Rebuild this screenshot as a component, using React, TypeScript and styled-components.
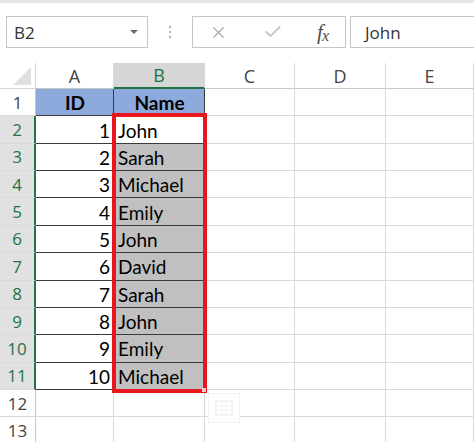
import React from "react";
import styled, { createGlobalStyle } from "styled-components";
import { X, Check } from "lucide-react";

const GlobalStyle = createGlobalStyle`
  html, body {
    margin: 0;
    padding: 0;
    background: #ffffff;
    overflow: hidden;
  }
  * {
    box-sizing: border-box;
  }
`;

const UI_FONT = `"Open Sans", "Noto Sans", sans-serif`;
const CELL_FONT = `Lato, "Liberation Sans", sans-serif`;
const GREEN = "#217346";
const GRID = "#d9d9d9";
const DARK = "#3b3b3b";

const columns = ["A", "B", "C", "D", "E"];
const names = [
  "John",
  "Sarah",
  "Michael",
  "Emily",
  "John",
  "David",
  "Sarah",
  "John",
  "Emily",
  "Michael",
];

// empty cells for columns C, D, E
const EmptyTail = () => (
  <>
    <Cell />
    <Cell />
    <Cell />
  </>
);

export default function App() {
  return (
    <>
      <GlobalStyle />
      <Page>
        <TopStrip />
        <FormulaBar>
          <NameBox>
            <span>B2</span>
            <DropArrow />
          </NameBox>
          <Grip>
            <Dot />
            <Dot />
            <Dot />
          </Grip>
          <ButtonBox>
            <X size={19} strokeWidth={1.4} color="#a6a6a6" />
            <Check size={20} strokeWidth={2.2} color="#c4c4c4" />
            <Fx>
              f<sub>x</sub>
            </Fx>
          </ButtonBox>
          <FormulaInput>John</FormulaInput>
        </FormulaBar>

        <Sheet>
          <Corner>
            <CornerTriangle />
          </Corner>
          {columns.map((c) => (
            <ColHeader key={c} $selected={c === "B"}>
              {c}
            </ColHeader>
          ))}

          <RowHeader $selected={false}>1</RowHeader>
          <Cell $fill="#8ea9db" $dark $bold $align="center">
            ID
          </Cell>
          <Cell $fill="#8ea9db" $dark $bold $align="center">
            Name
          </Cell>
          <EmptyTail />

          {names.map((name, i) => (
            <React.Fragment key={i}>
              <RowHeader $selected>{i + 2}</RowHeader>
              <Cell $dark $align="right">
                {i + 1}
              </Cell>
              <Cell $dark $fill={i === 0 ? "#ffffff" : "#c0c0c0"}>
                {name}
              </Cell>
              <EmptyTail />
            </React.Fragment>
          ))}

          {[12, 13].map((r) => (
            <React.Fragment key={r}>
              <RowHeader $selected={false}>{r}</RowHeader>
              <Cell />
              <Cell />
              <EmptyTail />
            </React.Fragment>
          ))}

          <Selection>
            <FillHandle />
          </Selection>
          <QuickAnalysis>
            <svg width="18" height="16" viewBox="0 0 18 16">
              <rect x="1" y="1" width="16" height="14" fill="none" stroke="#ececec" />
              <line x1="4" y1="6" x2="14" y2="6" stroke="#ececec" />
              <line x1="4" y1="10" x2="14" y2="10" stroke="#ececec" />
            </svg>
          </QuickAnalysis>
        </Sheet>
      </Page>
    </>
  );
}

const Page = styled.div`
  width: 474px;
  height: 442px;
  overflow: hidden;
  display: flex;
  flex-direction: column;
  background: #ffffff;
`;

const TopStrip = styled.div`
  height: 3px;
  background: #e6e6e6;
  flex-shrink: 0;
`;

const FormulaBar = styled.div`
  display: flex;
  align-items: stretch;
  height: 32px;
  margin: 13px 0 15px 6px;
  flex-shrink: 0;
  font-family: ${UI_FONT};
  font-size: 17px;
  color: #333333;
`;

const NameBox = styled.div`
  width: 142px;
  border: 1px solid #c6c6c6;
  display: flex;
  align-items: center;
  justify-content: space-between;
  padding: 0 9px 0 7px;
`;

const DropArrow = styled.span`
  width: 0;
  height: 0;
  border-left: 4px solid transparent;
  border-right: 4px solid transparent;
  border-top: 4px solid #6d6d6d;
`;

const Grip = styled.div`
  width: 44px;
  display: flex;
  flex-direction: column;
  align-items: center;
  justify-content: center;
  gap: 3px;
`;

const Dot = styled.span`
  width: 2px;
  height: 2px;
  border-radius: 50%;
  background: #9a9a9a;
`;

const ButtonBox = styled.div`
  width: 154px;
  border: 1px solid #c6c6c6;
  display: flex;
  align-items: center;
  justify-content: space-between;
  padding: 0 16px 0 16px;
`;

const Fx = styled.span`
  font-family: "Liberation Serif", "DejaVu Serif", serif;
  font-style: italic;
  font-size: 21px;
  color: #4d4d4d;
  line-height: 1;

  sub {
    font-size: 16px;
    vertical-align: baseline;
    position: relative;
    top: 2px;
    margin-left: -1px;
  }
`;

const FormulaInput = styled.div`
  flex: 1;
  margin-left: 4px;
  margin-right: -4px;
  border: 1px solid #c6c6c6;
  display: flex;
  align-items: center;
  padding-left: 14px;
`;

const Sheet = styled.div`
  position: relative;
  display: grid;
  grid-template-columns: 36px 78px 91px 90px 91px 88px;
  grid-template-rows: 26px repeat(13, 27.36px);
  flex-shrink: 0;
`;

const Corner = styled.div`
  position: relative;
  border-right: 1px solid ${GRID};
  border-bottom: 1px solid ${GRID};
`;

const CornerTriangle = styled.span`
  position: absolute;
  right: 4px;
  bottom: 3px;
  width: 0;
  height: 0;
  border-left: 18px solid transparent;
  border-bottom: 18px solid #dfdfdf;
`;

const ColHeader = styled.div<{ $selected: boolean }>`
  display: flex;
  align-items: center;
  justify-content: center;
  font-family: ${UI_FONT};
  font-size: 18px;
  color: ${(p) => (p.$selected ? GREEN : "#444444")};
  background: ${(p) => (p.$selected ? "#d6d6d6" : "#ffffff")};
  border-right: 1px solid ${GRID};
  border-bottom: ${(p) => (p.$selected ? `2px solid ${GREEN}` : `1px solid #c8c8c8`)};
`;

const RowHeader = styled.div<{ $selected: boolean }>`
  display: flex;
  align-items: center;
  justify-content: center;
  font-family: ${UI_FONT};
  font-size: 17px;
  color: ${(p) => (p.$selected ? GREEN : "#444444")};
  background: ${(p) => (p.$selected ? "#e1e1e1" : "#ffffff")};
  border-bottom: 1px solid ${GRID};
  border-right: ${(p) => (p.$selected ? `2px solid ${GREEN}` : `1px solid #c8c8c8`)};
`;

const Cell = styled.div<{
  $fill?: string;
  $dark?: boolean;
  $bold?: boolean;
  $align?: "left" | "center" | "right";
}>`
  display: flex;
  align-items: center;
  justify-content: ${(p) =>
    p.$align === "center" ? "center" : p.$align === "right" ? "flex-end" : "flex-start"};
  padding: 1px 3px 0 4px;
  font-family: ${CELL_FONT};
  font-size: 19px;
  font-weight: ${(p) => (p.$bold ? 700 : 400)};
  color: #000000;
  background: ${(p) => p.$fill ?? "#ffffff"};
  border-right: 1px solid ${(p) => (p.$dark ? DARK : GRID)};
  border-bottom: 1px solid ${(p) => (p.$dark ? DARK : GRID)};
  white-space: nowrap;
  overflow: hidden;
`;

const Selection = styled.div`
  position: absolute;
  left: 112px;
  top: 50px;
  width: 95px;
  height: 280px;
  border: 4px solid #e8161d;
  pointer-events: none;
`;

const FillHandle = styled.span`
  position: absolute;
  right: -3px;
  bottom: -3px;
  width: 4px;
  height: 4px;
  background: #f3c9c9;
`;

const QuickAnalysis = styled.div`
  position: absolute;
  left: 208px;
  top: 330px;
  width: 32px;
  height: 30px;
  border: 1px solid #f2f2f2;
  display: flex;
  align-items: center;
  justify-content: center;
  background: #ffffff;
`;
